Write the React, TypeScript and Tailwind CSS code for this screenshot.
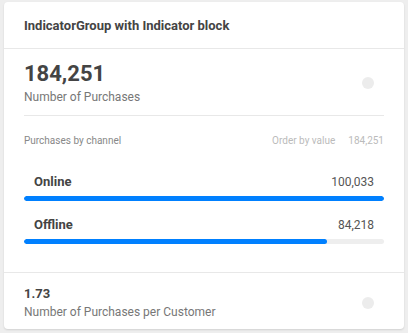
import React from 'react'

const rows = [
  { label: 'Online', value: 100033 },
  { label: 'Offline', value: 84218 },
]

function Dot() {
  return <div className="w-[12px] h-[12px] rounded-full bg-[#ececec] shrink-0" />
}

export default function App() {
  const max = Math.max(...rows.map((r) => r.value))
  return (
    <div className="w-[408px] h-[333px] bg-[#eeeeee] pt-[2px] px-[4px] font-['Roboto',sans-serif]">
      <div className="bg-white rounded-[4px] shadow-[0_1px_2px_rgba(0,0,0,0.12)] h-[327px] flex flex-col">
        {/* header */}
        <div className="h-[47px] border-b border-[#e8e8e8] flex items-center px-[20px] pt-[1px]">
          <p className="text-[13px] font-bold text-[#444]">IndicatorGroup with Indicator block</p>
        </div>

        <div className="px-[20px] flex-1">
          {/* main indicator */}
          <div className="flex items-center justify-between border-b border-[#e8e8e8] pt-[11px] pb-[9px] pr-[10px]">
            <div>
              <p className="text-[22px] font-bold leading-[28px] text-[#444]">184,251</p>
              <p className="text-[12px] leading-[18px] text-[#777]">Number of Purchases</p>
            </div>
            <Dot />
          </div>

          {/* channel header */}
          <div className="flex justify-between items-center mt-[19px] text-[10px] leading-[12px]">
            <span className="text-[#888]">Purchases by channel</span>
            <span className="text-[#bbb]">
              Order by value<span className="ml-[13px]">184,251</span>
            </span>
          </div>

          <div className="mt-[26px] flex flex-col gap-[15px]">
            {rows.map((r) => (
              <div key={r.label}>
                <div className="flex justify-between items-center px-[10px] text-[13px] leading-[18px]">
                  <span className="font-bold text-[#444]">{r.label}</span>
                  <span className="text-[#555] text-[12px]">{r.value.toLocaleString('en-US')}</span>
                </div>
                <div className="mt-[5px] h-[5px] rounded-full bg-[#eeeeee] overflow-hidden">
                  <div
                    className="h-full bg-[#0080ff] rounded-full"
                    style={{ width: `${(r.value / max) * 100}%` }}
                  />
                </div>
              </div>
            ))}
          </div>
        </div>

        {/* footer indicator */}
        <div className="h-[57px] border-t border-[#e8e8e8] flex items-center justify-between pl-[20px] pr-[30px] pt-[3px]">
          <div>
            <p className="text-[13px] font-bold leading-[18px] text-[#444]">1.73</p>
            <p className="text-[12px] leading-[18px] text-[#777]">Number of Purchases per Customer</p>
          </div>
          <Dot />
        </div>
      </div>
    </div>
  )
}
